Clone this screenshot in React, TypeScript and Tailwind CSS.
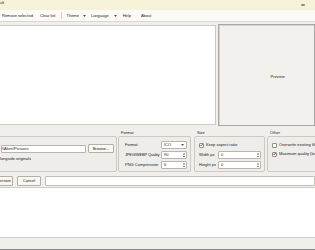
import React from "react";

const font = { fontFamily: '"Liberation Sans", Arial, sans-serif' };

function Arrow() {
  return (
    <svg width="3" height="2" viewBox="0 0 3 2" className="shrink-0">
      <path d="M0 0 L3 0 L1.5 2 Z" fill="#555" />
    </svg>
  );
}

function Check({ on }: { on?: boolean }) {
  return (
    <span className="w-[5px] h-[5px] bg-white border border-[#8f8d88] rounded-[1px] flex items-center justify-center shrink-0">
      {on && (
        <svg width="4" height="4" viewBox="0 0 4 4">
          <path d="M0.5 2 L1.6 3.2 L3.6 0.6" stroke="#222" strokeWidth="0.8" fill="none" />
        </svg>
      )}
    </span>
  );
}

function Spin({ value, w }: { value: string; w: string }) {
  return (
    <div className={`${w} h-[8px] bg-white border border-[#b8b5af] rounded-[1px] flex items-center`}>
      <span className="flex-1 pl-[2px]">{value}</span>
      <span className="w-[4px] h-full flex flex-col items-center justify-center gap-[1px]">
        <svg width="2" height="1.5" viewBox="0 0 2 1.5">
          <path d="M0 1.5 L2 1.5 L1 0 Z" fill="#444" />
        </svg>
        <svg width="2" height="1.5" viewBox="0 0 2 1.5">
          <path d="M0 0 L2 0 L1 1.5 Z" fill="#444" />
        </svg>
      </span>
    </div>
  );
}

function Group({ title, w, children }: { title: string; w: string; children: React.ReactNode }) {
  return (
    <div className={`${w} shrink-0 flex flex-col`}>
      <div className="h-[6px] pl-[3px] leading-[6px]">{title}</div>
      <div className="h-[36px] border border-[#cdcac4] rounded-[2px] bg-[#eeede9]">{children}</div>
    </div>
  );
}

export default function App() {
  return (
    <div className="w-[315px] h-[250px] overflow-hidden bg-[#f0efeb] text-[4px] text-[#1b1b1b] flex flex-col" style={font}>
      {/* title bar */}
      <div className="h-[10px] bg-[#f6f2da] flex items-start justify-between">
        <span className="leading-[5px]">ult</span>
        <span className="mt-[4px] mr-[10px] w-[4px] h-[2px] rounded-[1px] bg-[#8c8a84]" />
      </div>

      {/* toolbar */}
      <div className="h-[12px] bg-[#fbfaf7] border-b border-[#d9d7d2] flex items-center pl-[2px] whitespace-nowrap">
        <span>Remove selected</span>
        <span className="ml-[7px]">Clear list</span>
        <span className="ml-[6px] w-px h-[7px] bg-[#cfcdc8]" />
        <span className="ml-[4px]">Theme</span>
        <span className="ml-[4px]"><Arrow /></span>
        <span className="ml-[5px]">Language</span>
        <span className="ml-[5px]"><Arrow /></span>
        <span className="ml-[6px]">Help</span>
        <span className="ml-[10px]">About</span>
      </div>

      {/* main */}
      <div className="mt-[2px] h-[102px] flex items-start">
        <div className="w-[216px] h-[100px] mt-[1px] bg-white border-y border-r border-[#cbc9c3]" />
        <div className="ml-[2px] flex-1 h-[102px] bg-[#f2f1ed] border border-[#a9a7a2] shadow-[inset_1px_1px_0_#d6d4cf] flex items-center justify-center">
          <span className="ml-[22px] mt-[4px]">Preview</span>
        </div>
      </div>

      {/* options */}
      <div className="h-[48px] pt-[4px] flex">
        <div className="w-[117px] shrink-0 flex flex-col">
          <div className="h-[6px]" />
          <div className="h-[36px] -ml-[2px] border border-[#cdcac4] rounded-[2px] bg-[#eeede9] flex flex-col pt-[7px]">
            <div className="flex items-center pl-[2px]">
              <div className="w-[85px] h-[8px] bg-white border border-[#b8b5af] rounded-[1px] flex items-center pl-[2px] overflow-hidden whitespace-nowrap">
                <span className="-ml-[2px]">l\Alien\Pictures</span>
              </div>
              <div className="ml-[2px] w-[26px] h-[9px] bg-[#f8f7f4] border border-[#b3b0aa] rounded-[1px] flex items-center justify-center">
                Browse...
              </div>
            </div>
            <div className="mt-[3px] pl-[2px] whitespace-nowrap">
              <span className="-ml-[1px]">longside originals</span>
            </div>
          </div>
        </div>

        <div className="ml-[1px]">
          <Group title="Format" w="w-[73px]">
            <div className="flex flex-col gap-[2px] pt-[4px] pl-[6px] whitespace-nowrap">
              <div className="flex items-center">
                <span className="w-[36px]">Format</span>
                <div className="w-[26px] h-[8px] bg-white border border-[#b8b5af] rounded-[1px] flex items-center px-[2px]">
                  <span className="flex-1">ICO</span>
                  <Arrow />
                </div>
              </div>
              <div className="flex items-center">
                <span className="w-[36px] tracking-[-0.15px]">JPEG/WEBP Quality</span>
                <Spin value="90" w="w-[26px]" />
              </div>
              <div className="flex items-center">
                <span className="w-[36px]">PNG Compression</span>
                <Spin value="6" w="w-[26px]" />
              </div>
            </div>
          </Group>
        </div>

        <div className="ml-[3px]">
          <Group title="Size" w="w-[71px]">
            <div className="flex flex-col pt-[5px] pl-[4px] whitespace-nowrap">
              <div className="flex items-center gap-[2px]">
                <Check on />
                <span>Keep aspect ratio</span>
              </div>
              <div className="flex items-center mt-[3px]">
                <span className="w-[19px]">Width px</span>
                <Spin value="0" w="w-[43px]" />
              </div>
              <div className="flex items-center mt-[2px]">
                <span className="w-[19px]">Height px</span>
                <Spin value="0" w="w-[43px]" />
              </div>
            </div>
          </Group>
        </div>

        <div className="ml-[2px]">
          <Group title="Other" w="w-[70px]">
            <div className="flex flex-col pt-[5px] pl-[4px] gap-[3px] whitespace-nowrap">
              <div className="flex items-center gap-[2px]">
                <Check />
                <span>Overwrite existing files</span>
              </div>
              <div className="flex items-center gap-[2px]">
                <Check on />
                <span>Maximum quality (lossless)</span>
              </div>
            </div>
          </Group>
        </div>
      </div>

      {/* bottom row */}
      <div className="h-[13px] pt-[2px] flex items-start">
        <div className="w-[14px] h-[10px] -ml-[1px] bg-[#f8f7f4] border border-[#b3b0aa] rounded-[1px] flex items-center justify-end pr-[1px] overflow-hidden">
          ersion
        </div>
        <div className="ml-[4px] w-[24px] h-[10px] bg-[#f8f7f4] border border-[#b3b0aa] rounded-[1px] flex items-center justify-center">
          Cancel
        </div>
        <div className="ml-[4px] flex-1 h-[10px] bg-white border border-[#c3c0ba] rounded-[1px]" />
      </div>

      {/* log */}
      <div className="h-[51px] bg-white border-y border-[#cfcdc8]" />

      {/* status bar */}
      <div className="h-[11px] bg-[#f0efeb]" />
      <div className="h-[1px] bg-[#8a8a8a]" />
    </div>
  );
}
